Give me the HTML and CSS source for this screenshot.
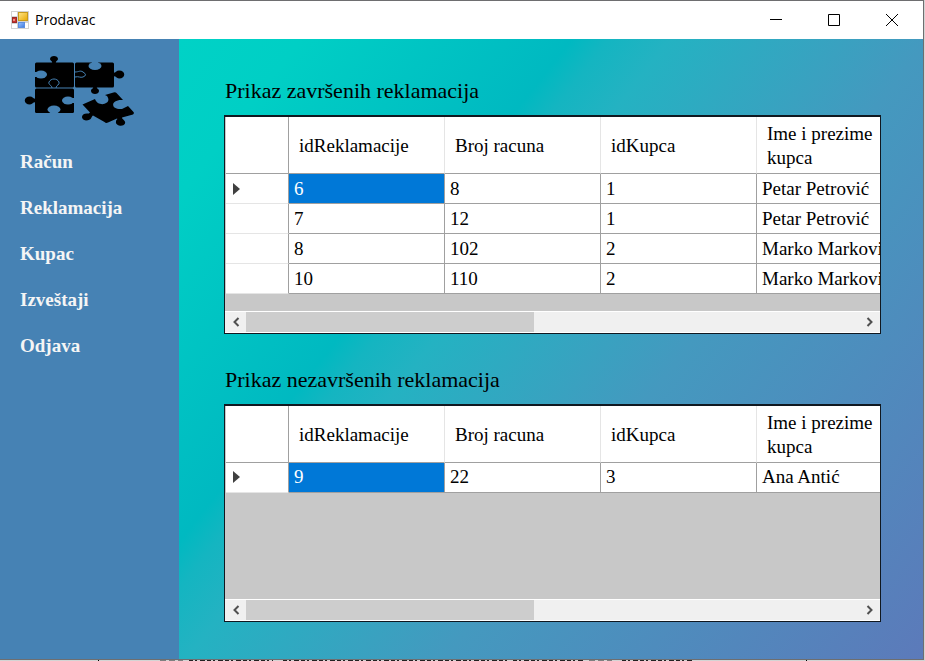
FILE: index.html
```html
<!DOCTYPE html>
<html lang="sr-Latn">
<head>
<meta charset="utf-8">
<meta name="viewport" content="width=device-width, initial-scale=1">
<title>Prodavac</title>
<link rel="stylesheet" href="styles.css">
</head>
<body>
<div class="window">
  <header class="titlebar">
    <svg class="app-icon" viewBox="0 0 18 18" aria-hidden="true">
      <defs>
        <linearGradient id="gold" x1="0" y1="0" x2="1" y2="1"><stop offset="0" stop-color="#ffe68a"/><stop offset="1" stop-color="#e8a800"/></linearGradient>
        <linearGradient id="sky" x1="0" y1="0" x2="1" y2="1"><stop offset="0" stop-color="#9cc4ff"/><stop offset="1" stop-color="#3b78e0"/></linearGradient>
      </defs>
      <rect width="18" height="18" fill="#d2d2d2"/>
      <path d="M1 1h5v4H1zM1 13h5v4H1zM14 12h3v5h-3z" fill="#fff"/>
      <rect x="7.500" y="1.500" width="9" height="8" fill="url(#gold)" stroke="#c79a1c"/>
      <rect x="1.500" y="6.500" width="4" height="5" fill="#c8332c" stroke="#9c2a28"/>
      <rect x="2" y="8" width="2" height="2" fill="#ef8d85"/>
      <rect x="7.500" y="11.500" width="6" height="5" fill="url(#sky)" stroke="#5c8fe0"/>
    </svg>
    <h1 class="caption">Prodavac</h1>
    <div class="window-buttons">
      <button type="button" aria-label="Minimize"><svg viewBox="0 0 12 12"><path d="M0 5.500h12"/></svg></button>
      <button type="button" aria-label="Maximize"><svg viewBox="0 0 12 12"><path d="M.5.500h11v11H.5z"/></svg></button>
      <button type="button" aria-label="Close"><svg viewBox="0 0 12 12"><path d="M0 0l12 12M12 0L0 12"/></svg></button>
    </div>
  </header>
  <div class="client">
    <aside class="sidebar">
      <svg class="logo" viewBox="0 0 110 72" aria-hidden="true">
        <rect x="11" y="6.500" width="39" height="25" rx="1.500"/>
        <rect x="51" y="6.500" width="39" height="25" rx="1.500"/>
        <rect x="11" y="32.500" width="39" height="24.500" rx="1.500"/>
        <g class="cut">
          <ellipse cx="17" cy="18.500" rx="6" ry="4"/>
          <path d="M10 16h4v5h-4z"/>
          <ellipse cx="71" cy="10" rx="6.500" ry="4"/>
          <path d="M68 6h6v4h-6z"/>
          <ellipse cx="44" cy="44.500" rx="6" ry="4"/>
          <path d="M46 42h5v5h-5z"/>
          <ellipse cx="30" cy="53.500" rx="6.500" ry="4"/>
          <path d="M27 53h6v5h-6z"/>
        </g>
        <path d="M28 7c1-2-2-2-2-4 0-4 8-4 8 0 0 2-3 2-2 4z"/>
        <path d="M89 16.500c3 1 3-2 6-2 7 0 7 8 0 8-3 0-3-3-6-2z"/>
        <path d="M12 42.500c-3 1-3-2-6-2-7 0-7 8 0 8 3 0 3-3 6-2z"/>
        <path d="M69 31c1 2-2 1-2 4 0 4 8 4 8 0 0-3-3-2-2-4z"/>
        <path class="seam" d="M51 16c4 0 5-2 8 0q5 3 0 5c-3 1-4-1-8 0M28 32c0-3-4-3-3-6 2-4 8-4 10 0 1 3-3 3-3 6"/>
        <path d="M58.500 48.500l12.500-5.500c3 9 18 5 12-3l-2-1 8.500-2.500q2-.5 3 .5l6.500 7c-13-1-13 10-1 9l6-3 5.500 6q1 1.500-.5 2.500L98 61.500c0 2 4 3 3 6-2 4-10 2-9-2 0-2 2-2 1-3l-9 4q-2 1-3.500-.5L69 59.500c-2 1-1 5-7 5-6-1-5-7 1-7 2 0 2 0 3-1z"/>
      </svg>
      <nav class="menu" aria-label="Meni">
        <a href="#racun">Račun</a>
        <a href="#reklamacija">Reklamacija</a>
        <a href="#kupac">Kupac</a>
        <a href="#izvestaji">Izveštaji</a>
        <a href="#odjava">Odjava</a>
      </nav>
    </aside>
    <main class="content">
      <section class="panel">
        <h2 id="closed-title">Prikaz završenih reklamacija</h2>
        <div class="grid">
          <div class="grid-view">
            <table aria-labelledby="closed-title">
              <colgroup><col class="col-marker"><col><col><col><col></colgroup>
              <thead>
                <tr><td></td><th scope="col">idReklamacije</th><th scope="col">Broj racuna</th><th scope="col">idKupca</th><th scope="col">Ime i prezime kupca</th></tr>
              </thead>
              <tbody>
                <tr><td class="marker"><svg viewBox="0 0 7 12" aria-hidden="true"><path d="M0 0l7 6-7 6z"/></svg></td><td class="selected">6</td><td>8</td><td>1</td><td>Petar Petrović</td></tr>
                <tr><td class="marker"></td><td>7</td><td>12</td><td>1</td><td>Petar Petrović</td></tr>
                <tr><td class="marker"></td><td>8</td><td>102</td><td>2</td><td>Marko Marković</td></tr>
                <tr><td class="marker"></td><td>10</td><td>110</td><td>2</td><td>Marko Marković</td></tr>
              </tbody>
            </table>
          </div>
          <div class="scrollbar">
            <button type="button" aria-label="Levo"><svg viewBox="0 0 8 10"><path d="M6.500 1l-4 4 4 4"/></svg></button>
            <div class="track"><div class="thumb"></div></div>
            <button type="button" aria-label="Desno"><svg viewBox="0 0 8 10"><path d="M1.500 1l4 4-4 4"/></svg></button>
          </div>
        </div>
      </section>
      <section class="panel">
        <h2 id="open-title">Prikaz nezavršenih reklamacija</h2>
        <div class="grid">
          <div class="grid-view">
            <table aria-labelledby="open-title">
              <colgroup><col class="col-marker"><col><col><col><col></colgroup>
              <thead>
                <tr><td></td><th scope="col">idReklamacije</th><th scope="col">Broj racuna</th><th scope="col">idKupca</th><th scope="col">Ime i prezime kupca</th></tr>
              </thead>
              <tbody>
                <tr><td class="marker"><svg viewBox="0 0 7 12" aria-hidden="true"><path d="M0 0l7 6-7 6z"/></svg></td><td class="selected">9</td><td>22</td><td>3</td><td>Ana Antić</td></tr>
              </tbody>
            </table>
          </div>
          <div class="scrollbar">
            <button type="button" aria-label="Levo"><svg viewBox="0 0 8 10"><path d="M6.500 1l-4 4 4 4"/></svg></button>
            <div class="track"><div class="thumb"></div></div>
            <button type="button" aria-label="Desno"><svg viewBox="0 0 8 10"><path d="M1.500 1l4 4-4 4"/></svg></button>
          </div>
        </div>
      </section>
    </main>
  </div>
</div>
<svg class="backdrop" height="1" aria-hidden="true">
  <path class="backdrop-edge" d="M98 .5h1M806 .5h1"/>
  <path class="backdrop-muted" d="M160 .5h23M589 .5h23"/>
  <path class="backdrop-marks" d="M189 .5h84M283 .5h224M513 .5h70M622 .5h71"/>
</svg>
</body>
</html>
```
FILE: styles.css
```css
* {
  box-sizing: border-box;
}

body {
  margin: 0;
  min-height: 100vh;
  display: flex;
  flex-direction: column;
  background: #d4d4d4;
  color: #000;
  font-family: "Liberation Serif", "Times New Roman", serif;
  font-size: 19px;
}

button {
  border: 0;
  padding: 0;
  background: none;
  display: flex;
  align-items: center;
  justify-content: center;
}

.window {
  flex: 1;
  display: flex;
  flex-direction: column;
  margin-right: 1px;
  border: solid #6e6e70;
  border-width: 1px 1px 1px 0;
}

.titlebar {
  height: 38px;
  display: flex;
  align-items: center;
  padding: 0 2px 0 11px;
  background: #fff;
}

.app-icon {
  width: 18px;
  height: 18px;
}

.caption {
  margin: 0 auto 0 6px;
  font: 14px/20px "Open Sans", "Segoe UI", sans-serif;
}

.window-buttons {
  display: flex;
  align-self: stretch;
}

.window-buttons button {
  width: 58px;
}

.window-buttons svg {
  width: 12px;
  height: 12px;
  fill: none;
  stroke: #000;
}

.client {
  flex: 1;
  display: flex;
}

.sidebar {
  width: 179px;
  padding: 17px 20px;
  background: #4682b4;
}

.logo {
  display: block;
  width: 110px;
  height: 72px;
  margin-left: 4px;
}

.cut {
  fill: #4682b4;
}

.seam {
  fill: none;
  stroke: #4682b4;
}

.menu {
  display: flex;
  flex-direction: column;
  align-items: flex-start;
  gap: 22px;
  margin-top: 22px;
}

.menu a {
  color: #f5f5f5;
  font-weight: bold;
  line-height: 24px;
  text-decoration: none;
}

.content {
  flex: 1;
  min-width: 0;
  display: flex;
  flex-direction: column;
  gap: 32px;
  padding: 38px 42px 37px 45px;
  background: linear-gradient(128deg, #00d2c6 0%, #00cfc5 10%, #00b9c1 32%, #14b5c1 35%, #24b2c2 40%, #4499bf 61%, #5c7aba 100%);
}

.panel {
  flex: 1;
  display: flex;
  flex-direction: column;
}

.panel h2 {
  margin: 0 0 11px;
  padding-left: 1px;
  font-size: 22px;
  font-weight: normal;
  line-height: 27px;
}

.grid {
  flex: 1;
  display: flex;
  flex-direction: column;
  border: 1px solid #101820;
  border-top-width: 2px;
  background: #c8c8c8;
}

.grid-view {
  flex: 1;
  overflow: hidden;
  padding-left: 1px;
}

table {
  width: 687px;
  table-layout: fixed;
  border-collapse: separate;
  border-spacing: 0;
  background: #fff;
}

.col-marker {
  width: 63px;
}

th,
td {
  padding: 0 5px;
  border: solid #a0a0a0;
  border-width: 0 1px 1px 0;
  line-height: 24px;
  text-align: left;
  white-space: nowrap;
}

th {
  padding: 2px 10px 0;
  border-right-color: #e5e5e5;
  font-weight: normal;
  white-space: normal;
}

thead tr {
  height: 57px;
}

tbody tr {
  height: 30px;
}

.marker {
  padding-left: 7px;
  border-bottom-color: #e5e5e5;
}

.marker svg {
  display: block;
  width: 7px;
  height: 12px;
  fill: #404040;
}

.selected {
  background: #0078d7;
  color: #fff;
}

.scrollbar {
  height: 22px;
  display: flex;
  border: solid #fff;
  border-width: 1px 0;
  background: #f0f0f0;
}

.scrollbar button {
  width: 21px;
}

.scrollbar svg {
  width: 8px;
  height: 10px;
  fill: none;
  stroke: #505050;
  stroke-width: 2;
}

.track {
  flex: 1;
  display: flex;
}

.thumb {
  width: 47%;
  background: #cdcdcd;
}

.backdrop {
  display: block;
  width: 100%;
  fill: none;
}

.backdrop-edge {
  stroke: #000;
}

.backdrop-muted {
  stroke: #808080;
  stroke-dasharray: 6 3;
}

.backdrop-marks {
  stroke: #222;
  stroke-dasharray: 4 2 2 3 5 2;
}
```
